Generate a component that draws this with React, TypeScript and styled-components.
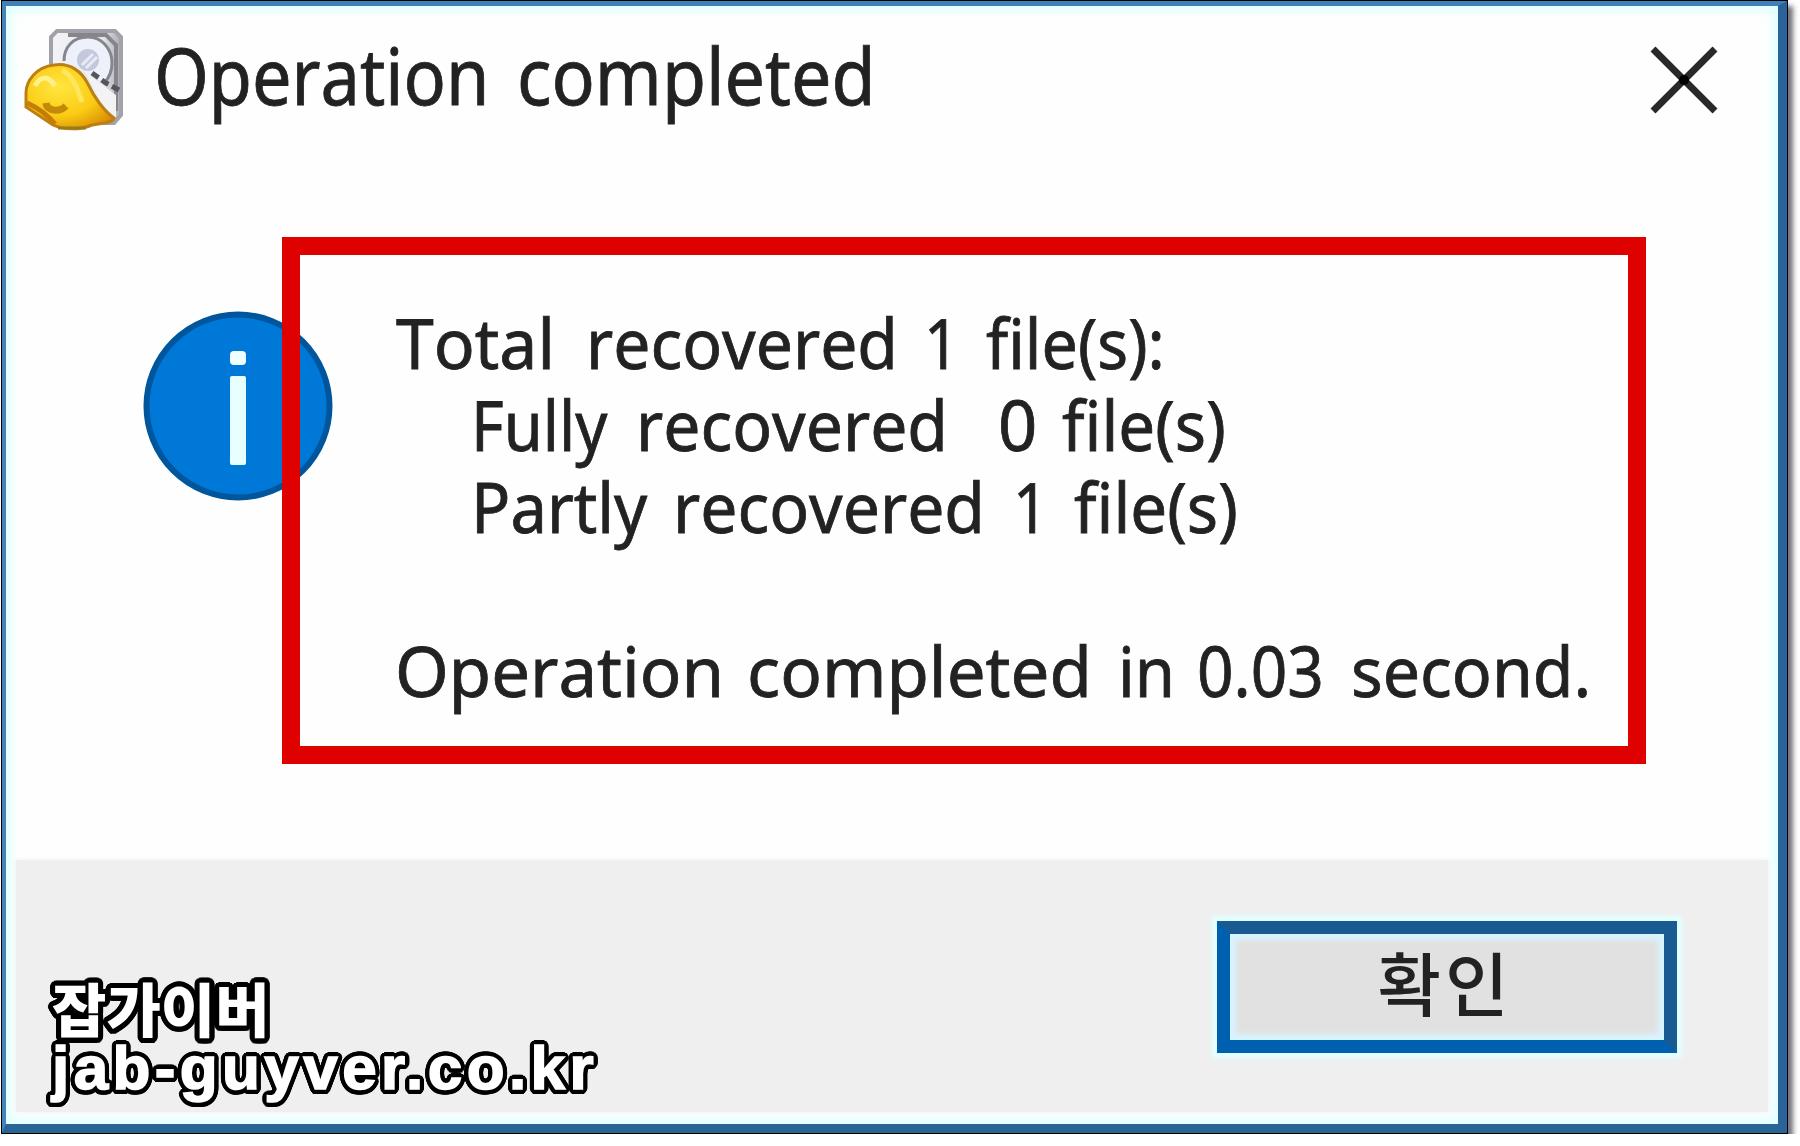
import styled, { createGlobalStyle } from "styled-components"

type Word = {
  text: string
  width: number
  gap?: number
  stretch: number
}

const title: Word[] = [
  { text: "Operation", width: 329, stretch: 0.9 },
  { text: "completed", width: 352, gap: 34, stretch: 0.92 },
]

const message: Word[][] = [
  [
    { text: "Total", width: 159, gap: 1, stretch: 0.97 },
    { text: "recovered", width: 305, gap: 31, stretch: 0.943 },
    { text: "1", width: 22, gap: 33, stretch: 0.88 },
    { text: "file(s):", width: 177, gap: 40, stretch: 0.922 },
  ],
  [
    { text: "Fully", width: 134, gap: 76, stretch: 0.9 },
    { text: "recovered", width: 305, gap: 31, stretch: 0.943 },
    { text: "0", width: 36, gap: 57, stretch: 0.98 },
    { text: "file(s)", width: 162, gap: 28, stretch: 0.935 },
  ],
  [
    { text: "Partly", width: 172, gap: 76, stretch: 0.93 },
    { text: "recovered", width: 303, gap: 30, stretch: 0.943 },
    { text: "1", width: 22, gap: 37, stretch: 0.88 },
    { text: "file(s)", width: 161, gap: 39, stretch: 0.935 },
  ],
  [],
  [
    { text: "Operation", width: 322, gap: 0, stretch: 0.984 },
    { text: "completed", width: 342, gap: 30, stretch: 0.986 },
    { text: "in", width: 50, gap: 29, stretch: 0.93 },
    { text: "0.03", width: 123, gap: 29, stretch: 0.914 },
    { text: "second.", width: 239, gap: 31, stretch: 0.946 },
  ],
]

const outline = Array.from({ length: 28 }, (_, i) => {
  const angle = (i / 28) * Math.PI * 2
  return `${(Math.cos(angle) * 5).toFixed(2)}px ${(Math.sin(angle) * 5).toFixed(2)}px 0 #000`
}).join(", ")

const App = () => {
  return (
    <>
      <GlobalStyle />
      <Window>
        <Frame>
          <TitleBar>
            <RecoveryIcon />
            <Title>
              {title.map((word) => (
                <WordBox key={word.text} $width={word.width} $gap={word.gap}>
                  <Glyphs $stretch={word.stretch}>{word.text}</Glyphs>
                </WordBox>
              ))}
            </Title>
            <CloseIcon />
          </TitleBar>
          <Content>
            <InfoIcon />
            <Message>
              {message.map((line, i) => (
                <Line key={i}>
                  {line.map((word, j) => (
                    <WordBox key={j} $width={word.width} $gap={word.gap}>
                      <Glyphs $stretch={word.stretch}>{word.text}</Glyphs>
                    </WordBox>
                  ))}
                </Line>
              ))}
            </Message>
            <Highlight />
          </Content>
          <Footer>
            <Watermark>
              <WatermarkName>잡가이버</WatermarkName>
              <WatermarkUrl>jab-guyver.co.kr</WatermarkUrl>
            </Watermark>
            <ConfirmButton>확인</ConfirmButton>
          </Footer>
        </Frame>
      </Window>
    </>
  )
}
export default App

const RecoveryIcon = () => (
  <AppIcon viewBox="0 0 104 106">
    <defs>
      <linearGradient id="drive" x1="0" y1="0" x2="1" y2="0">
        <stop offset="0" stopColor="#f4f4f8" />
        <stop offset="0.75" stopColor="#e4e5ea" />
        <stop offset="1" stopColor="#a9a9ae" />
      </linearGradient>
      <radialGradient id="hat" cx="0.38" cy="0.35" r="0.75">
        <stop offset="0" stopColor="#ffe640" />
        <stop offset="0.6" stopColor="#fbcb14" />
        <stop offset="1" stopColor="#d98f04" />
      </radialGradient>
    </defs>
    <path d="M35 4H93L99 10V88L92 96H34L29 88V10Z" fill="url(#drive)" stroke="#a2a2a8" strokeWidth="4" />
    <path d="M46 8H84L94 18V84" fill="none" stroke="#85858b" strokeWidth="4" />
    <path d="M42 34C42 20 51 10 66 10C80 10 90 22 90 36C90 46 86 52 82 56" fill="#eef0fa" stroke="#85878f" strokeWidth="3" />
    <circle cx="66" cy="33" r="11" fill="#c3c8dc" />
    <path d="M60 38L71 27M64 41L75 30" stroke="#e8ebf5" strokeWidth="3" />
    <path d="M70 46L84 56L97 63" fill="none" stroke="#55555c" strokeWidth="5" strokeDasharray="8 4" />
    <path d="M64 46L94 68V90L86 92Z" fill="#f3f3f5" />
    <path
      d="M4 66C4 54 14 40 32 38C48 35 60 45 66 57C72 70 82 84 92 91C90 97 78 96 70 98C58 103 42 103 31 98L4 80Z"
      fill="url(#hat)"
      stroke="#bd7f14"
      strokeWidth="3"
    />
    <path d="M5 76C14 80 24 86 33 97" fill="none" stroke="#c57d05" strokeWidth="5" />
    <path d="M24 76C25 85 38 85 44 79" fill="none" stroke="#c28a08" strokeWidth="7" />
    <path d="M13 59C18 49 26 48 33 59" fill="none" stroke="#fff08c" strokeWidth="5" />
    <path d="M40 43C50 48 55 60 60 75" fill="none" stroke="#ffe65a" strokeWidth="5" />
    <path d="M36 101H64" stroke="#9b7a1c" strokeWidth="3" />
  </AppIcon>
)

const CloseIcon = () => (
  <CloseSvg viewBox="0 0 70 70">
    <path d="M4 4L66 66M66 4L4 66" fill="none" stroke="#292929" strokeWidth="7" />
    <circle cx="35" cy="35" r="5" fill="#000" />
  </CloseSvg>
)

const InfoIcon = () => (
  <InfoSvg viewBox="0 0 190 190">
    <circle cx="95" cy="95" r="91.5" fill="#0078d7" stroke="#00569c" strokeWidth="6" />
    <rect x="87" y="40" width="16" height="14" rx="4" fill="#f0ffff" />
    <rect x="87" y="65" width="16" height="89" rx="2" fill="#e8ffff" />
  </InfoSvg>
)

const GlobalStyle = createGlobalStyle`
  body {
    margin: 0;
    background: #fff;
    overflow: hidden;
  }
`

const Window = styled.main`
  box-sizing: border-box;
  width: 1787px;
  height: 1134px;
  margin-left: 1px;
  border: 1px solid #000;
  box-shadow: 5px 6px 5px rgba(38, 36, 48, 0.65);
`

const Frame = styled.div`
  box-sizing: border-box;
  height: 100%;
  display: flex;
  flex-direction: column;
  border-style: solid;
  border-width: 5px 9px 9px 4px;
  border-color: #3f80b8 #296399 #296496 #4285bb;
  background: #fefefe;
  box-shadow: inset 0 0 9px 6px #e2ffff;
`

const TitleBar = styled.header`
  height: 148px;
  box-sizing: border-box;
  display: flex;
  align-items: flex-start;
  padding: 19px 59px 0 16px;
`

const AppIcon = styled.svg`
  width: 104px;
  height: 106px;
  margin-top: 2px;
`

const Title = styled.h1`
  display: flex;
  margin: 0 auto 0 28px;
  font: 400 78px/100px "Noto Sans", sans-serif;
  color: #222;
`

const CloseSvg = styled.svg`
  width: 70px;
  height: 70px;
  margin-top: 20px;
`

const Content = styled.section`
  position: relative;
  flex: 1;
  display: flex;
  align-items: flex-start;
  padding: 147px 0 0 137px;
`

const InfoSvg = styled.svg`
  width: 190px;
  height: 190px;
  margin-top: 10px;
`

const Message = styled.div`
  margin-left: 62px;
  font: 400 70px/82px "Noto Sans", sans-serif;
  color: #222;
`

const Line = styled.p`
  display: flex;
  height: 82px;
  margin: 0;
`

const WordBox = styled.span<{ $width: number; $gap?: number }>`
  width: ${({ $width }) => $width}px;
  margin-left: ${({ $gap }) => $gap ?? 0}px;
`

const Glyphs = styled.span<{ $stretch: number }>`
  display: inline-block;
  white-space: pre;
  font-kerning: none;
  -webkit-text-stroke: 0.8px #222;
  transform: scaleX(${({ $stretch }) => $stretch});
  transform-origin: left;
`

const Highlight = styled.div`
  position: absolute;
  top: 83px;
  left: 276px;
  box-sizing: border-box;
  width: 1364px;
  height: 527px;
  border: 18px solid #df0000;
`

const Footer = styled.footer`
  box-sizing: border-box;
  height: 252px;
  margin: 0 10px 12px;
  padding: 61px 91px 0 36px;
  display: flex;
  justify-content: space-between;
  align-items: flex-start;
  background: #efefef;
  box-shadow: 0 0 5px #efefef;
`

const Watermark = styled.div`
  padding-top: 55px;
  color: #fff;
  text-shadow: ${outline};
`

const WatermarkName = styled.div`
  font: 900 58px/62px "Noto Sans CJK KR", sans-serif;
  transform: scaleX(1.02);
  transform-origin: left;
`

const WatermarkUrl = styled.div`
  font: 700 62px/59px "Liberation Sans", sans-serif;
  letter-spacing: 4.4px;
  -webkit-text-stroke: 1.6px #fff;
`

const ConfirmButton = styled.button`
  box-sizing: border-box;
  width: 460px;
  height: 132px;
  padding: 0 4px 12px 0;
  border-style: solid;
  border-width: 13px;
  border-color: #1a5a92 #1a5a92 #0060b0 #0060b0;
  background: #e1e1e1;
  box-shadow: 0 0 4px 5px #e2ffff, inset 0 0 5px 6px #d8f4ff;
  font: 500 69px/90px "Noto Sans CJK KR", sans-serif;
  letter-spacing: 4px;
  color: #222;
`
